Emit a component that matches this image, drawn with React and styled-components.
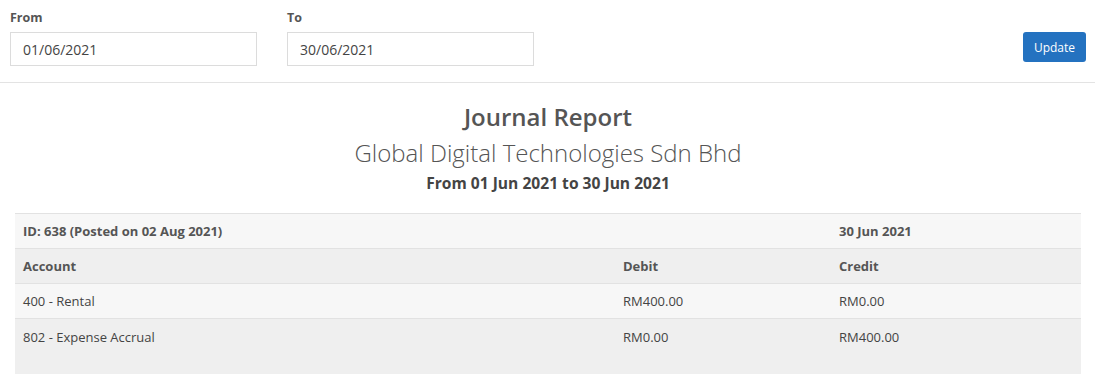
import React from "react";
import styled, { createGlobalStyle } from "styled-components";

const GlobalStyle = createGlobalStyle`
  body {
    margin: 0;
    background: #fff;
    font-family: "Open Sans", "Liberation Sans", sans-serif;
    color: #444;
  }
`;

const rows = [
  { account: "400 - Rental", debit: "RM400.00", credit: "RM0.00" },
  { account: "802 - Expense Accrual", debit: "RM0.00", credit: "RM400.00" },
];

const App = () => {
  return (
    <>
      <GlobalStyle />
      <Filters>
        <Field>
          <Label>From</Label>
          <DateInput defaultValue="01/06/2021" />
        </Field>
        <Field>
          <Label>To</Label>
          <DateInput defaultValue="30/06/2021" />
        </Field>
        <UpdateButton>Update</UpdateButton>
      </Filters>
      <Report>
        <Title>Journal Report</Title>
        <Company>Global Digital Technologies Sdn Bhd</Company>
        <Period>From 01 Jun 2021 to 30 Jun 2021</Period>
        <Table>
          <colgroup>
            <col style={{ width: 600 }} />
            <col style={{ width: 216 }} />
            <col />
          </colgroup>
          <tbody>
            <Row $shade="light">
              <Cell $bold colSpan={2}>
                ID: 638 (Posted on 02 Aug 2021)
              </Cell>
              <Cell $bold>30 Jun 2021</Cell>
            </Row>
            <Row $shade="dark">
              <Cell $bold>Account</Cell>
              <Cell $bold>Debit</Cell>
              <Cell $bold>Credit</Cell>
            </Row>
            {rows.map((r, i) => (
              <Row
                key={r.account}
                $shade={i % 2 === 0 ? "light" : "dark"}
                $last={i === rows.length - 1}
              >
                <Cell>{r.account}</Cell>
                <Cell>{r.debit}</Cell>
                <Cell>{r.credit}</Cell>
              </Row>
            ))}
          </tbody>
        </Table>
      </Report>
    </>
  );
};

const Filters = styled.div`
  display: flex;
  align-items: flex-start;
  gap: 30px;
  height: 83px;
  padding: 0 9px 0 10px;
  border-bottom: 1px solid #e3e3e3;
  box-sizing: border-box;
`;

const Field = styled.div`
  display: flex;
  flex-direction: column;
`;

const Label = styled.label`
  font-size: 12.5px;
  font-weight: 700;
  color: #555;
  line-height: 16px;
  margin-top: 10px;
  margin-bottom: 6px;
`;

const DateInput = styled.input`
  width: 247px;
  height: 34px;
  box-sizing: border-box;
  border: 1px solid #dcdcdc;
  padding: 0 12px;
  font-family: inherit;
  font-size: 14px;
  color: #444;
  outline: none;
`;

const UpdateButton = styled.button`
  margin-left: auto;
  margin-top: 32px;
  width: 63px;
  height: 30px;
  border: none;
  border-radius: 3px;
  background: #2472c0;
  color: #fff;
  font-family: inherit;
  font-size: 12px;
  cursor: pointer;
`;

const Report = styled.div`
  display: flex;
  flex-direction: column;
  align-items: center;
  padding: 16px 14px 0 15px;
`;

const Title = styled.h1`
  margin: 0;
  font-size: 24px;
  font-weight: 600;
  color: #555;
  line-height: 36px;
`;

const Company = styled.h2`
  margin: 0;
  font-size: 24px;
  font-weight: 300;
  color: #555;
  line-height: 36px;
`;

const Period = styled.h3`
  margin: 0 0 18px;
  font-size: 15.6px;
  font-weight: 700;
  color: #444;
  line-height: 24px;
`;

const Table = styled.table`
  width: 100%;
  border-collapse: collapse;
  table-layout: fixed;
  border-top: 1px solid #e2e2e2;
`;

const Row = styled.tr`
  background: ${(p) => (p.$shade === "dark" ? "#efefef" : "#f7f7f7")};
  border-bottom: ${(p) => (p.$last ? "none" : "1px solid #e2e2e2")};

  td {
    height: ${(p) => (p.$last ? "55px" : "35px")};
    vertical-align: ${(p) => (p.$last ? "top" : "middle")};
    padding-top: ${(p) => (p.$last ? "9px" : "0")};
  }
`;

const Cell = styled.td`
  padding: 0 8px;
  font-size: 13px;
  font-weight: ${(p) => (p.$bold ? 700 : 400)};
  color: ${(p) => (p.$bold ? "#555" : "#444")};
  box-sizing: border-box;
  white-space: nowrap;
`;

export default App;
